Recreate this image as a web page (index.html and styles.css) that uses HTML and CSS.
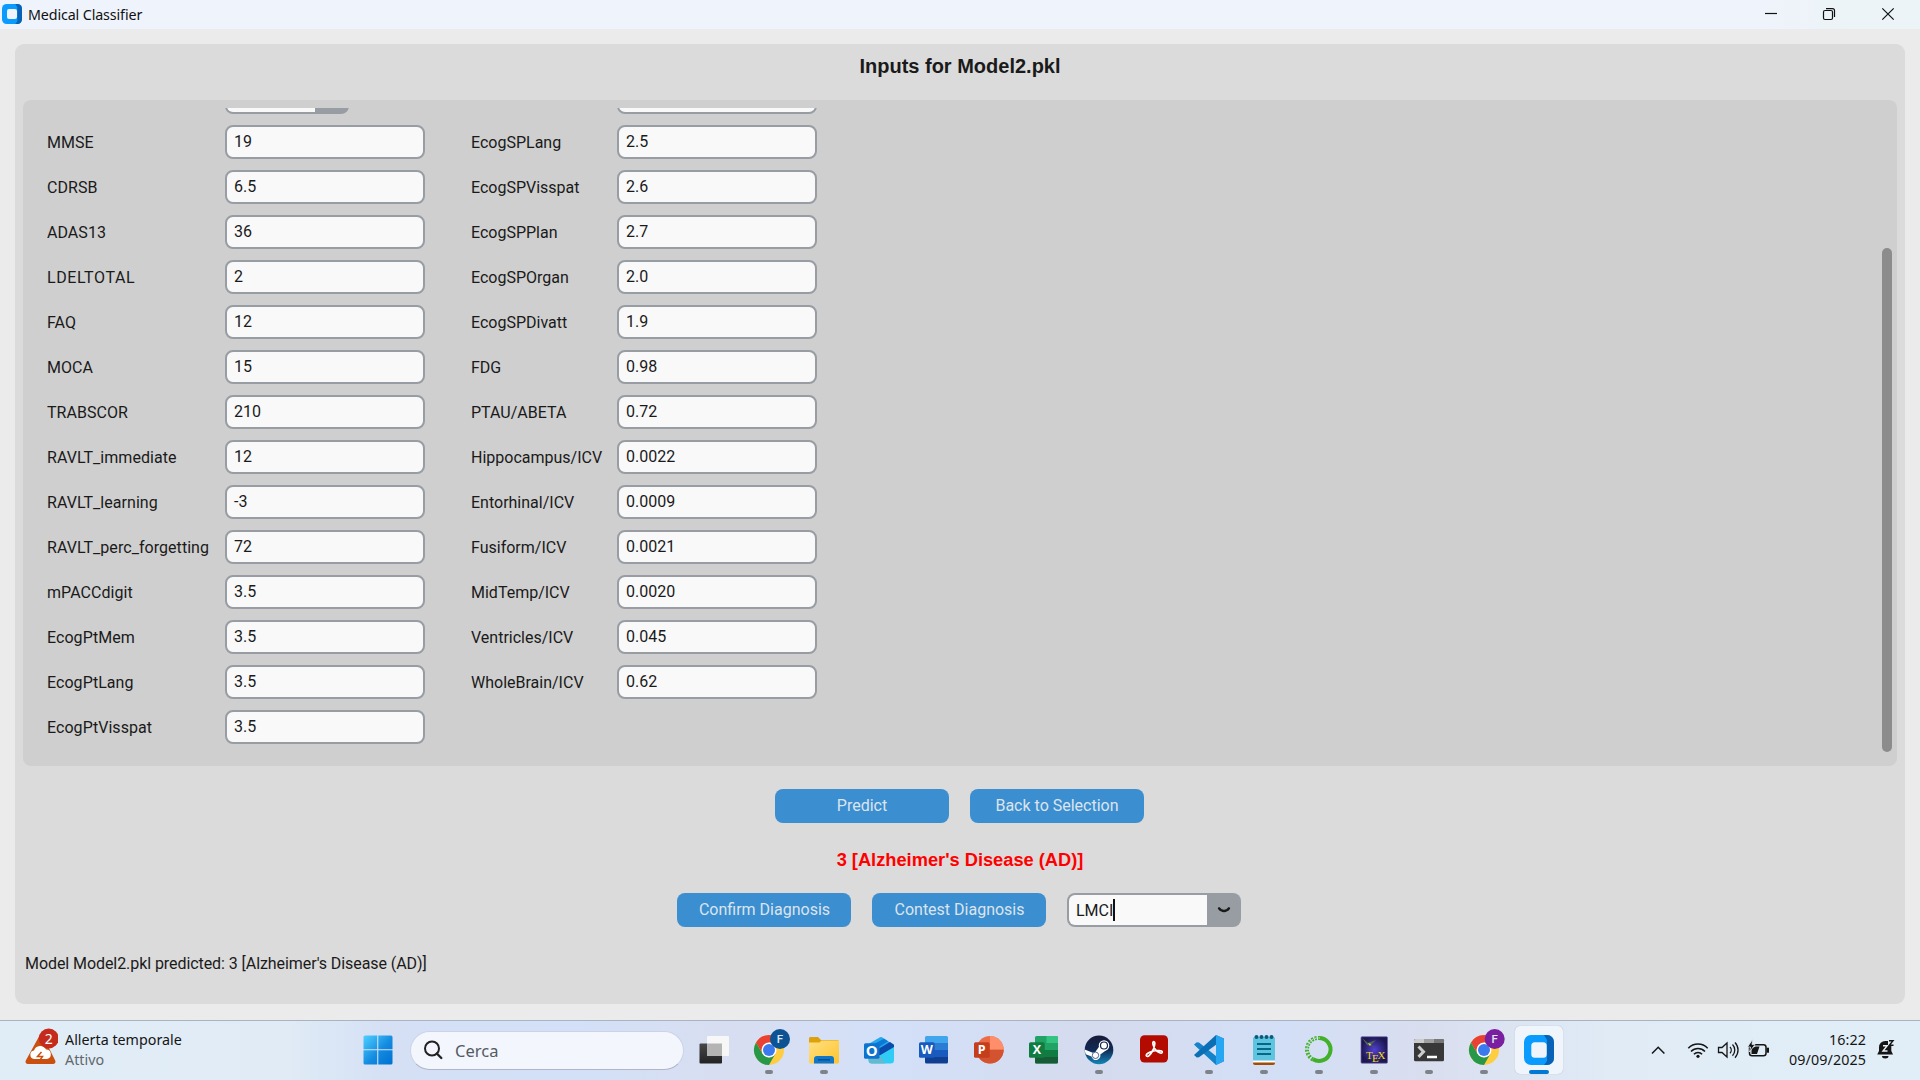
FILE: index.html
```html
<!DOCTYPE html>
<html lang="it">
<head>
<meta charset="utf-8">
<title>Medical Classifier</title>
<link rel="stylesheet" href="styles.css">
</head>
<body>
<header class="titlebar">
  <svg class="app-icon" width="20" height="20" viewBox="0 0 30 30"><rect width="30" height="30" rx="7" fill="#0a9bff"/><path d="M20 0h3a7 7 0 0 1 7 7v16a7 7 0 0 1-7 7h-3l3-4V5z" fill="#0862b5"/><rect x="7.500" y="7.500" width="15" height="15" rx="3" fill="#eff3fb"/></svg>
  <span class="app-name">Medical Classifier</span>
  <svg class="win-controls" width="140" height="29" viewBox="0 0 140 29" fill="none" stroke="#111" stroke-width="1.200"><path d="M5 13.500h12"/><rect x="63.500" y="10.500" width="9" height="9" rx="1.500"/><path d="M66 8.600h6.500a2 2 0 0 1 2 2V17"/><path d="M122.300 8.300l11.400 11.400M133.700 8.300l-11.400 11.400"/></svg>
</header>
<main class="panel">
  <h1 class="heading">Inputs for Model2.pkl</h1>
  <section class="scroll-frame">
    <div class="viewport">
      <div class="form form-left">
        <span></span><div class="combo combo-clipped"><span class="combo-text"></span><span class="combo-arrow"></span></div>
        <label>MMSE</label><div class="entry">19</div>
        <label>CDRSB</label><div class="entry">6.5</div>
        <label>ADAS13</label><div class="entry">36</div>
        <label class="wide">LDELTOTAL</label><div class="entry">2</div>
        <label>FAQ</label><div class="entry">12</div>
        <label>MOCA</label><div class="entry">15</div>
        <label>TRABSCOR</label><div class="entry">210</div>
        <label>RAVLT_immediate</label><div class="entry">12</div>
        <label>RAVLT_learning</label><div class="entry">-3</div>
        <label>RAVLT_perc_forgetting</label><div class="entry">72</div>
        <label>mPACCdigit</label><div class="entry">3.5</div>
        <label>EcogPtMem</label><div class="entry">3.5</div>
        <label>EcogPtLang</label><div class="entry">3.5</div>
        <label>EcogPtVisspat</label><div class="entry">3.5</div>
      </div>
      <div class="form form-right">
        <span></span><div class="entry"></div>
        <label>EcogSPLang</label><div class="entry">2.5</div>
        <label>EcogSPVisspat</label><div class="entry">2.6</div>
        <label>EcogSPPlan</label><div class="entry">2.7</div>
        <label>EcogSPOrgan</label><div class="entry">2.0</div>
        <label>EcogSPDivatt</label><div class="entry">1.9</div>
        <label>FDG</label><div class="entry">0.98</div>
        <label>PTAU/ABETA</label><div class="entry">0.72</div>
        <label>Hippocampus/ICV</label><div class="entry">0.0022</div>
        <label>Entorhinal/ICV</label><div class="entry">0.0009</div>
        <label>Fusiform/ICV</label><div class="entry">0.0021</div>
        <label>MidTemp/ICV</label><div class="entry">0.0020</div>
        <label>Ventricles/ICV</label><div class="entry">0.045</div>
        <label>WholeBrain/ICV</label><div class="entry">0.62</div>
      </div>
    </div>
    <div class="scrollbar"><div class="thumb"></div></div>
  </section>
  <div class="actions">
    <button class="btn">Predict</button>
    <button class="btn">Back to Selection</button>
  </div>
  <div class="result">3 [Alzheimer's Disease (AD)]</div>
  <div class="actions">
    <button class="btn">Confirm Diagnosis</button>
    <button class="btn">Contest Diagnosis</button>
    <div class="combo"><span class="combo-text">LMCI<i class="caret"></i></span><span class="combo-arrow"><svg width="14" height="8" viewBox="0 0 14 8"><path d="M2 2.300Q4 5 7 5T12 2.300" fill="none" stroke="#1a1a1a" stroke-width="2.300" stroke-linecap="round"/></svg></span></div>
  </div>
  <p class="log">Model Model2.pkl predicted: 3 [Alzheimer's Disease (AD)]</p>
</main>
<footer class="taskbar">
  <div class="weather">
    <svg class="alert" width="36" height="44" viewBox="0 0 36 44"><path d="M17 9.500c1-1.700 3.200-1.700 4.200 0l12 24c.9 1.700-.3 3.500-2.200 3.500H6c-1.900 0-3.100-1.800-2.200-3.500z" fill="#ca5010"/><path d="M12 32a4.300 4.300 0 0 1 0-8.500 6.500 6.500 0 0 1 12-1 4.800 4.800 0 0 1 1 9.500z" fill="#fff"/><path d="M19.500 25l-4 4.500h5l-3.500 5" fill="none" stroke="#ca5010" stroke-width="1.500"/><circle cx="26.700" cy="11.500" r="10" fill="#c42b1c"/><text x="26.700" y="16.500" class="badge-two">2</text></svg>
    <div class="weather-text"><span>Allerta temporale</span><span class="muted">Attivo</span></div>
  </div>
  <svg class="start" width="30" height="30" viewBox="0 0 30 30"><defs><linearGradient id="win" x1="0" y1="0" x2="1" y2="1"><stop offset="0" stop-color="#4fd0ff"/><stop offset=".55" stop-color="#138be0"/><stop offset="1" stop-color="#0070d0"/></linearGradient></defs><path fill="url(#win)" d="M2 .5h12.200v13.700H.5V2A1.500 1.500 0 0 1 2 .5zM15.300.5H28A1.500 1.500 0 0 1 29.500 2v12.200H15.300zM.5 15.300h13.700v14.200H2A1.500 1.500 0 0 1 .5 28zM15.300 15.300h14.200V28a1.500 1.500 0 0 1-1.500 1.500H15.300z"/></svg>
  <div class="search"><svg width="20" height="20" viewBox="0 0 20 20" fill="none" stroke="#222" stroke-width="2"><circle cx="9" cy="8.500" r="7"/><path d="M13.800 13.500l4.500 4.500" stroke-width="2.400" stroke-linecap="round"/></svg><span>Cerca</span></div>
  <nav class="apps">
    <svg class="app" viewBox="0 0 48 48"><defs><linearGradient id="tv" x1="0" y1="0" x2="0" y2="1"><stop offset="0" stop-color="#484848"/><stop offset="1" stop-color="#222"/></linearGradient></defs><rect x="9.500" y="17.500" width="22.500" height="20" rx="1" fill="url(#tv)"/><rect x="17" y="10" width="22" height="20" rx="1" fill="#f7f7f7"/><path d="M17 17.500h15V30H17z" fill="#b4b4b4"/></svg>
    <svg class="app" viewBox="0 0 48 48"><g id="chrome"><circle cx="24" cy="24" r="15" fill="#ffcd40"/><path d="M11 16.500A15 15 0 0 1 37 16.500H24L17.500 27.700z" fill="#e94235"/><path d="M11 16.500L17.500 27.700 24 31.500 30.400 27.700 24 39A15 15 0 0 1 11 16.500z" fill="#279847"/><circle cx="24" cy="24" r="7.500" fill="#fff"/><circle cx="24" cy="24" r="6" fill="#3b79ee"/></g><circle cx="35" cy="13" r="10" fill="#0d5394"/><text x="35" y="17" class="badge">F</text><rect class="dot" x="20" y="44" width="8" height="4" rx="2"/></svg>
    <svg class="app" viewBox="0 0 48 48"><defs><linearGradient id="fold" x1="0" y1="0" x2="1" y2="1"><stop offset="0" stop-color="#ffe083"/><stop offset="1" stop-color="#ffc42c"/></linearGradient></defs><path d="M9 12.500A1.500 1.500 0 0 1 10.500 11H18l3 3h16a2 2 0 0 1 2 2v4H9z" fill="#dea10a"/><path d="M9 16.500h10.500l2-2H38a1 1 0 0 1 1 1v20.500a1.500 1.500 0 0 1-1.500 1.500h-27A1.500 1.500 0 0 1 9 36z" fill="url(#fold)"/><path d="M14 37.500V33a3 3 0 0 1 3-3h14a3 3 0 0 1 3 3v4.500z" fill="#0f76c9"/><path d="M18 33.700h12" stroke="#084d91" stroke-width="1.500"/><rect class="dot" x="20" y="44" width="8" height="4" rx="2"/></svg>
    <svg class="app" viewBox="0 0 48 48"><path d="M13.500 18L25 11.300a2 2 0 0 1 2 0L39 19v6L20 34l-6.500-4z" fill="#28a8ea"/><path d="M19 18l10-5.300 4 2.500L24 21z" fill="#0a7ad6"/><path d="M24 22.500l11-6.500 4 2.800v3L24 30z" fill="#0b4bac"/><path d="M13.500 30L24 30l15-9v13a3.500 3.500 0 0 1-3.500 3.500H17a3.500 3.500 0 0 1-3.500-3.500z" fill="#2fcdf5"/><path d="M13.500 31l11-2 6 8.500H17a3.500 3.500 0 0 1-3.500-3.500z" fill="#66b9cf"/><rect x="9" y="17.300" width="15.500" height="15.500" rx="1.500" fill="#0c73cf"/><text x="16.700" y="30" class="letter">O</text></svg>
    <svg class="app" viewBox="0 0 48 48"><path d="M15 11.500A1.500 1.500 0 0 1 16.500 10h20a1.500 1.500 0 0 1 1.500 1.500V17H15z" fill="#41a5ee"/><path d="M15 17h23v7H15z" fill="#2b7cd3"/><path d="M15 24h23v7H15z" fill="#185abd"/><path d="M15 31h23v5a1.500 1.500 0 0 1-1.500 1.500h-20A1.500 1.500 0 0 1 15 36z" fill="#103f91"/><rect x="9" y="16.300" width="15.700" height="15.500" rx="1.500" fill="#185abd"/><text x="16.800" y="28.300" class="letter small">W</text></svg>
    <svg class="app" viewBox="0 0 48 48"><circle cx="25" cy="23.800" r="13.700" fill="#ed6c47"/><path d="M25 10.100a13.700 13.700 0 0 1 13.700 13.700H25z" fill="#ff8f6b"/><path d="M11.300 23.800h27.400a13.700 13.700 0 0 1-27.400 0z" fill="#d35230"/><rect x="9" y="16.300" width="15.700" height="15.500" rx="1.500" fill="#c43e1c"/><text x="16.800" y="28.300" class="letter small">P</text></svg>
    <svg class="app" viewBox="0 0 48 48"><rect x="15" y="10" width="23" height="27.500" rx="1.500" fill="#21a366"/><path d="M26.500 10h10a1.500 1.500 0 0 1 1.500 1.500V17H26.500z" fill="#33c481"/><path d="M15 24h23v7H15z" fill="#107c41"/><path d="M15 31h23v5a1.500 1.500 0 0 1-1.500 1.500h-20A1.500 1.500 0 0 1 15 36z" fill="#185c37"/><rect x="9" y="16.300" width="15.700" height="15.500" rx="1.500" fill="#107c41"/><text x="16.800" y="28.300" class="letter small">X</text></svg>
    <svg class="app" viewBox="0 0 48 48"><defs><linearGradient id="steam" x1="0" y1="0" x2="0" y2="1"><stop offset="0" stop-color="#171a38"/><stop offset=".5" stop-color="#112a55"/><stop offset="1" stop-color="#1387b8"/></linearGradient></defs><circle cx="24" cy="23.900" r="14.300" fill="url(#steam)"/><path d="M9.700 23.500l8 3.300c.8-.5 1.700-.8 2.600-.8l3.700-5.300 8.500 2.500-7.200 5.200a4.500 4.500 0 0 1-8.800 2.200l-5.700-2.400a14 14 0 0 1-1.100-4.700z" fill="#fff"/><circle cx="29" cy="19.500" r="5.300" fill="#fff"/><circle cx="29" cy="19.500" r="3.500" fill="#fff" stroke="#14264a" stroke-width="1.200"/><circle cx="20.500" cy="29.300" r="3.200" fill="#fff" stroke="#14315c" stroke-width=".7"/><rect class="dot" x="20" y="44" width="8" height="4" rx="2"/></svg>
    <svg class="app" viewBox="0 0 48 48"><rect x="10" y="9.300" width="28" height="27.300" rx="4.500" fill="#b30b00"/><path d="M16.500 30c-1.200-1.500 2-3.700 6-4.800s10-1 9.800 1c-.3 2-4.500.3-6.800-2.500s-3.600-8.200-1.800-8.200c2 0 1 5.500-1.200 9.500S17.700 31.500 16.500 30z" fill="none" stroke="#fff" stroke-width="1.700"/></svg>
    <svg class="app" viewBox="0 0 48 48"><path d="M31 9l8 3.500v22.800L31 39 11 20.500l-2-2 2.800-2.300 2.200.3L31 30z" fill="#1583c9"/><path d="M31 9L9 29l2.800 2.500 2.200-.3L32 18z" fill="#0c6fb5"/><path d="M31 9l6.500 3A2.500 2.500 0 0 1 39 14.300v19.400a2.500 2.500 0 0 1-1.500 2.300L31 39z" fill="#27a7f2"/><rect class="dot" x="20" y="44" width="8" height="4" rx="2"/></svg>
    <svg class="app" viewBox="0 0 48 48"><path d="M13 12.500A1.500 1.500 0 0 1 14.500 11h19a1.500 1.500 0 0 1 1.500 1.500V35H13z" fill="#5fc5de"/><path d="M13 35h22v2a2 2 0 0 1-2 2H15a2 2 0 0 1-2-2z" fill="#a44c05"/><path d="M13 34.500h22V36.500H13z" fill="#fff"/><g fill="#075c7c"><circle cx="16.500" cy="11" r="2"/><circle cx="21.500" cy="11" r="2"/><circle cx="26.500" cy="11" r="2"/><circle cx="31.500" cy="11" r="2"/></g><path d="M17 18h14M17 23h14M17 28h14" stroke="#07678a" stroke-width="2"/><rect class="dot" x="20" y="44" width="8" height="4" rx="2"/></svg>
    <svg class="app" viewBox="0 0 48 48"><path d="M24 12a11.500 11.500 0 1 1-6 21.300" fill="none" stroke="#43b02a" stroke-width="4"/><path d="M25 12a11.500 11.500 0 0 0-7 21.500" fill="none" stroke="#43b02a" stroke-width="4" stroke-dasharray="2 1.300"/><path d="M25 12a11.500 11.500 0 0 0-7 21.500" fill="none" stroke="#d9e8e4" stroke-width="1" stroke-dasharray="1.500 2"/><rect class="dot" x="20" y="44" width="8" height="4" rx="2"/></svg>
    <svg class="app" viewBox="0 0 48 48"><defs><radialGradient id="tex"><stop offset="0" stop-color="#5240d0"/><stop offset="1" stop-color="#1c1850"/></radialGradient></defs><rect x="11" y="10.700" width="26.500" height="26.500" rx="1" fill="url(#tex)" stroke="#7161ad" stroke-width=".7"/><path d="M12 12l6 5 8-3-5 5 4 2-8-2z" fill="#526357"/><path d="M18 17l3 1-1 2z" fill="#dce451"/><text x="16" y="33" class="tex">T</text><text x="22" y="36.300" class="tex">E</text><text x="27.500" y="33" class="tex">X</text><rect class="dot" x="20" y="44" width="8" height="4" rx="2"/></svg>
    <svg class="app" viewBox="0 0 48 48"><rect x="9" y="13" width="30" height="22.300" rx="1.500" fill="#383838"/><path d="M9 17v-2.500A1.500 1.500 0 0 1 10.500 13H19v4z" fill="#ccc"/><path d="M19 13h10v4H19z" fill="#a0a0a0"/><path d="M29 13h8.500a1.500 1.500 0 0 1 1.500 1.500V17H29z" fill="#777"/><path d="M13.500 20.500l5 5.200-5 5.200" fill="none" stroke="#ccc" stroke-width="3"/><path d="M22 31h10" stroke="#fff" stroke-width="2.600"/><rect class="dot" x="20" y="44" width="8" height="4" rx="2"/></svg>
    <svg class="app" viewBox="0 0 48 48"><use href="#chrome"/><circle cx="34.700" cy="13" r="10" fill="#7a1fa0"/><text x="34.700" y="17" class="badge">F</text><rect class="dot" x="20" y="44" width="8" height="4" rx="2"/></svg>
    <svg class="app active" viewBox="0 0 48 48"><rect x="9" y="9" width="30" height="30" rx="7" fill="#0a9bff"/><path d="M29 9h3a7 7 0 0 1 7 7v16a7 7 0 0 1-7 7h-3l3-4V14z" fill="#0862b5"/><rect x="16.300" y="16.300" width="15.400" height="15.400" rx="3.500" fill="#f0f5fb"/><rect x="14" y="44" width="20" height="4" rx="2" fill="#0078d4"/></svg>
  </nav>
  <div class="tray">
    <svg width="120" height="24" viewBox="0 0 120 24" fill="none" stroke="#151515" stroke-width="1.500">
      <path d="M2 15.500l6.200-6.200 6.200 6.200"/>
      <g transform="translate(6 0)">
      <path d="M32.300 10.300a13.300 13.300 0 0 1 19.400 0M35 13.500a9.800 9.800 0 0 1 14 0M37.900 16.300a5.700 5.700 0 0 1 8.200 0"/><circle cx="42" cy="18.300" r="1.600" fill="#151515" stroke="none"/>
      <path d="M62.500 9.500h3.500l5-4.500v14l-5-4.500h-3.500z" stroke-width="1.300"/><path d="M74 9a4.500 4.500 0 0 1 0 6.200M76.500 6.500a8 8 0 0 1 0 11.200M79 4.500a11 11 0 0 1 0 15.200" stroke-width="1.300"/>
      <rect x="93.500" y="6.700" width="16.500" height="11" rx="2.500"/><path d="M95.500 16v-5.500l4-2h4L101 16z" fill="#151515" stroke="none"/><path d="M110.500 9.700h2.500v5h-2.500z" fill="#151515" stroke="none"/><path d="M96.500 1.500l-5 7.500h3l-1 5 5.500-7.500h-3z" fill="#151515" stroke="#e1edf7" stroke-width=".8"/>
      </g>
    </svg>
    <div class="clock"><span>16:22</span><span>09/09/2025</span></div>
    <svg width="20" height="22" viewBox="0 0 20 22"><path d="M3 12V8.200A6.200 6.200 0 0 1 9.200 2H12v5h3.300v5l1.700 3.500H1.200z" fill="#151515"/><path d="M6 17h6.500a3.250 2.500 0 0 1-6.500 0z" fill="#151515"/><path d="M7 6.800h4.200L7 12h4.500" fill="none" stroke="#e8f1f8" stroke-width="1.400"/><path d="M13 1.800h4L13.300 6.300h4.200" fill="none" stroke="#151515" stroke-width="1.400"/></svg>
  </div>
</footer>
</body>
</html>
```
FILE: styles.css
```css
* { box-sizing: border-box; }
body { margin: 0; width: 1920px; height: 1080px; overflow: hidden; display: flex; flex-direction: column; background: #ebebeb; font-family: Roboto, sans-serif; color: #1a1a1a; }
svg { display: block; flex: none; }
.titlebar { flex: none; height: 29px; display: flex; align-items: center; padding-left: 2px; background: linear-gradient(90deg, #eff3fb 0 92%, #ecf4f7 96%); }
.app-icon { margin-bottom: 1px; }
.app-name { margin-left: 6px; font: 14.3px "Noto Sans", sans-serif; letter-spacing: -0.13px; color: #111; }
.win-controls { margin-left: auto; margin-right: 20px; }
.panel { flex: none; height: 960px; margin: 15px 15px 0; padding: 0 8px; display: flex; flex-direction: column; background: #dbdbdb; border-radius: 9px; }
.heading { flex: none; margin: 0; height: 56px; padding-top: 10px; text-align: center; font: 700 20px/24px "Liberation Sans", sans-serif; }
.scroll-frame { flex: none; height: 666px; padding: 8px 5px 8px 24px; display: flex; justify-content: space-between; background: #cfcfcf; border-radius: 8px; font-size: 16px; }
.viewport { display: flex; align-items: flex-start; gap: 46px; overflow: hidden; }
.form { display: grid; grid-auto-rows: 34px; row-gap: 11px; margin-top: -28px; align-items: center; }
.form-left { grid-template-columns: 178px 200px; letter-spacing: 0.05px; }
.form-right { grid-template-columns: 146px 200px; }
.wide { letter-spacing: 0.6px; }
.entry { height: 34px; padding: 0 0 1px 7px; background: #f9f9fa; border: 2px solid #979da2; border-radius: 8px; line-height: 29px; }
.scrollbar { width: 10px; padding-top: 140px; }
.thumb { height: 504px; border-radius: 5px; background: #8c8c8c; }
.actions { flex: none; margin-top: 23px; display: flex; justify-content: center; gap: 21px; padding-right: 2px; }
.btn { width: 174px; height: 34px; padding: 0 0 2px 1px; border: 0; border-radius: 8px; background: #3b8ed0; color: #dce4ee; font: 16px Roboto, sans-serif; }
.result { flex: none; height: 47px; padding-top: 25px; text-align: center; color: #f00; font: 700 18.25px/24px "Liberation Sans", sans-serif; }
.combo { display: flex; width: 174px; height: 34px; border-radius: 8px; background: #979da2; padding: 2px 0 2px 2px; font-size: 16px; }
.combo-clipped { width: 124px; }
.combo-text { flex: 1; display: flex; align-items: center; padding-left: 7px; background: #f9f9fa; border-radius: 6px 0 0 6px; }
.caret { width: 2px; height: 22px; background: #111; }
.combo-arrow { width: 34px; display: flex; align-items: center; justify-content: center; }
.log { margin: 25px 0 0 2px; font-size: 16px; letter-spacing: -0.07px; line-height: 24px; }
.taskbar { flex: none; margin-top: 16px; height: 60px; display: flex; align-items: center; border-top: 1px solid #a9b4c2; padding-bottom: 1px; background: linear-gradient(90deg, #e1edf6 0, #e0ebf6 15%, #d5e0f5 20%, #d3e0f7 30%, #d8def1 38%, #d3e0f8 46%, #d5dbee 57%, #d3dff6 67%, #d9deef 74%, #e0ebf6 84%, #e1eef7); font-family: "Noto Sans", sans-serif; }
.weather { display: flex; align-items: center; width: 362.500px; padding-left: 22px; gap: 7px; }
.alert { margin-bottom: 3px; }
.weather-text { display: flex; flex-direction: column; font-size: 14.3px; line-height: 20px; padding-bottom: 1px; color: #151515; }
.weather-text .muted { color: #62676b; }
.badge-two { font-size: 14px; text-anchor: middle; fill: #fff; }
.search { display: flex; align-items: center; gap: 12px; width: 274px; height: 39px; margin-left: 17.500px; padding-left: 12px; border-radius: 20px; background: #f3f6fd; border: 1px solid #cbd4e6; border-bottom-color: #aeb6c8; color: #555b63; font-size: 16.5px; }
.apps { display: flex; gap: 7px; margin-left: 6px; }
.app { width: 48px; height: 48px; border-radius: 5px; }
.active { background: #f0f5fb; box-shadow: 0 0 1px #9eabb9; }
.dot { fill: #7e8289; }
.badge { font: 500 11.5px Roboto, sans-serif; text-anchor: middle; fill: #dce7f2; }
.letter { font: 700 15px "Open Sans", sans-serif; text-anchor: middle; fill: #fff; }
.small { font-size: 12.5px; }
.tex { font: 11px "Liberation Serif", serif; fill: #f5d820; }
.tray { display: flex; align-items: center; margin-left: auto; margin-right: 24px; }
.clock { width: 96px; display: flex; flex-direction: column; align-items: flex-end; margin-right: 10px; padding-bottom: 1px; font-size: 14.3px; line-height: 20px; color: #151515; letter-spacing: 0.1px; }
```
